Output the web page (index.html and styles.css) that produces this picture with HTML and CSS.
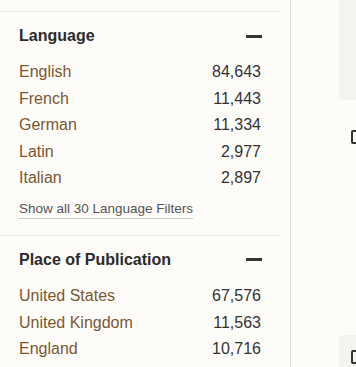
FILE: index.html
```html
<!DOCTYPE html>
<html lang="en">
<head>
    <meta charset="UTF-8">
    <meta name="viewport" content="width=device-width, initial-scale=1.0">
    <title>Search Filters</title>
    <link rel="stylesheet" href="styles.css">
</head>
<body>
    <div class="layout">
        <aside class="filters">
            <section class="filter">
                <div class="filter-head">
                    <h2>Language</h2>
                    <span class="collapse"></span>
                </div>
                <ul class="filter-list">
                    <li><a href="#">English</a><span class="count">84,643</span></li>
                    <li><a href="#">French</a><span class="count">11,443</span></li>
                    <li><a href="#">German</a><span class="count">11,334</span></li>
                    <li><a href="#">Latin</a><span class="count">2,977</span></li>
                    <li><a href="#">Italian</a><span class="count">2,897</span></li>
                </ul>
                <a class="show-all" href="#">Show all 30 Language Filters</a>
            </section>

            <section class="filter">
                <div class="filter-head">
                    <h2>Place of Publication</h2>
                    <span class="collapse"></span>
                </div>
                <ul class="filter-list">
                    <li><a href="#">United States</a><span class="count">67,576</span></li>
                    <li><a href="#">United Kingdom</a><span class="count">11,563</span></li>
                    <li><a href="#">England</a><span class="count">10,716</span></li>
                </ul>
            </section>
        </aside>

        <main class="results">
            <div class="card card-top"></div>
            <label class="select-row"><span class="box"></span></label>
            <div class="card card-item"><span class="box"></span></div>
        </main>
    </div>
</body>
</html>
```

FILE: styles.css
```css
body {
    margin: 0;
    background: #fdfcf9;
    font-family: "Liberation Sans", Arial, sans-serif;
    overflow: hidden;
}

.layout {
    display: flex;
    height: 100vh;
    overflow: hidden;
}

/* left column with filters */
.filters {
    flex-shrink: 0;
    width: 280px;
    padding: 11px 10px 0 0;
    border-right: 1px solid #dddcd9;
    overflow: hidden;
}

.filter {
    border-top: 1px solid #e6e4e0;
    padding: 14px 19px 16px;
}

.filter-head {
    display: flex;
    justify-content: space-between;
    align-items: center;
    height: 20px;
    margin-bottom: 13px;
}

.filter-head h2 {
    margin: 0;
    font-size: 16px;
    line-height: 20px;
    font-weight: bold;
    color: #2b2b2b;
}

.collapse {
    width: 16px;
    height: 3px;
    margin-right: -1px;
    background: #353535;
}

.filter-list {
    list-style: none;
    margin: 0;
    padding: 0;
}

.filter-list li {
    display: flex;
    justify-content: space-between;
    font-size: 16px;
    line-height: 26.6px;
}

.filter-list a {
    color: #7b5731;
    text-decoration: none;
}

.count {
    color: #333;
}

.show-all {
    display: inline-block;
    margin-top: 8px;
    font-size: 13.5px;
    line-height: 18px;
    color: #555;
    text-decoration: none;
    border-bottom: 1px solid #c9c9c9;
}

/* right column, results */
.results {
    flex: 1;
    padding-left: 48px;
    overflow: hidden;
}

.card {
    background: #f4f3f0;
    border-radius: 4px 0 0 4px;
}

.card-top {
    margin-top: -10px;
    height: 110px;
}

.select-row {
    display: block;
    margin: 30px 0 0 12px;
}

.card-item {
    margin-top: 191px;
    padding: 15px 12px;
    height: 80px;
}

.box {
    display: block;
    width: 14px;
    height: 14px;
    box-sizing: border-box;
    border: 2px solid #333;
    border-radius: 2px;
}
```
